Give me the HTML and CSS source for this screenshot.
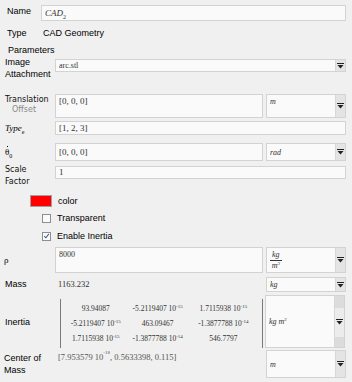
FILE: index.html
```html
<!DOCTYPE html>
<html lang="en">
<head>
    <meta charset="UTF-8" />
    <link rel="stylesheet" href="styles.css">
    <title>CAD Geometry</title>
</head>
<body>
    <div class="panel">
        <div class="row row-name">
            <span class="lbl lbl-short">Name</span>
            <div class="field"><i>CAD</i><sub>2</sub></div>
        </div>

        <div class="row row-type">
            <span class="lbl lbl-short">Type</span>
            <span class="plain">CAD Geometry</span>
        </div>

        <div class="row row-params">
            <span class="section">Parameters</span>
        </div>

        <div class="row row-image">
            <span class="lbl">Image<br>Attachment</span>
            <div class="combo combo-wide">
                <span class="combo-text">arc.stl</span>
                <span class="arrow"><svg width="7" height="6" viewBox="0 0 7 6"><rect x="0" y="0" width="7" height="1" fill="#222"/><path d="M0.5 2h6l-3 3.5z" fill="#222"/></svg></span>
            </div>
        </div>

        <div class="row row-trans">
            <span class="lbl lbl-alt">Translation<br><span class="sub-lbl">Offset</span></span>
            <div class="field field-tall">[0, 0, 0]</div>
            <div class="combo unit">
                <span class="combo-text"><i>m</i></span>
                <span class="arrow"><svg width="7" height="6" viewBox="0 0 7 6"><rect x="0" y="0" width="7" height="1" fill="#222"/><path d="M0.5 2h6l-3 3.5z" fill="#222"/></svg></span>
            </div>
        </div>

        <div class="row row-typee">
            <span class="lbl lbl-math"><i>Type</i><sub>e</sub></span>
            <div class="field">[1, 2, 3]</div>
        </div>

        <div class="row row-theta">
            <span class="lbl lbl-math"><span class="dot-over">θ</span><sub>0</sub></span>
            <div class="field">[0, 0, 0]</div>
            <div class="combo unit">
                <span class="combo-text"><i>rad</i></span>
                <span class="arrow"><svg width="7" height="6" viewBox="0 0 7 6"><rect x="0" y="0" width="7" height="1" fill="#222"/><path d="M0.5 2h6l-3 3.5z" fill="#222"/></svg></span>
            </div>
        </div>

        <div class="row row-scale">
            <span class="lbl lbl-alt">Scale<br>Factor</span>
            <div class="field">1</div>
        </div>

        <div class="row row-color">
            <span class="swatch"></span>
            <span class="plain">color</span>
        </div>

        <div class="row row-check">
            <span class="checkbox"></span>
            <span class="plain">Transparent</span>
        </div>

        <div class="row row-check row-inertia-check">
            <span class="checkbox">
                <svg width="8" height="8" viewBox="0 0 8 8"><path d="M1.5 4.2l1.8 1.8 3.4-4.4" fill="none" stroke="#3b5a9a" stroke-width="1.2"/></svg>
            </span>
            <span class="plain">Enable Inertia</span>
        </div>

        <div class="row row-rho">
            <span class="lbl lbl-rho">ρ</span>
            <div class="field field-rho">8000</div>
            <div class="combo unit">
                <span class="combo-text">
                    <span class="frac"><i class="num">kg</i><i class="den">m<sup>3</sup></i></span>
                </span>
                <span class="arrow"><svg width="7" height="6" viewBox="0 0 7 6"><rect x="0" y="0" width="7" height="1" fill="#222"/><path d="M0.5 2h6l-3 3.5z" fill="#222"/></svg></span>
            </div>
        </div>

        <div class="row row-mass">
            <span class="lbl">Mass</span>
            <span class="value">1163.232</span>
            <div class="combo unit">
                <span class="combo-text"><i>kg</i></span>
                <span class="arrow"><svg width="7" height="6" viewBox="0 0 7 6"><rect x="0" y="0" width="7" height="1" fill="#222"/><path d="M0.5 2h6l-3 3.5z" fill="#222"/></svg></span>
            </div>
        </div>

        <div class="row row-matrix">
            <span class="lbl">Inertia</span>
            <div class="matrix">
                <div class="mrow">
                    <span class="cell c1">93.94087</span>
                    <span class="cell c2">-5.2119407 10<sup>-15</sup></span>
                    <span class="cell c3">1.7115938 10<sup>-15</sup></span>
                </div>
                <div class="mrow">
                    <span class="cell c1">-5.2119407 10<sup>-15</sup></span>
                    <span class="cell c2">463.09467</span>
                    <span class="cell c3">-1.3877788 10<sup>-14</sup></span>
                </div>
                <div class="mrow">
                    <span class="cell c1">1.7115938 10<sup>-15</sup></span>
                    <span class="cell c2">-1.3877788 10<sup>-14</sup></span>
                    <span class="cell c3">546.7797</span>
                </div>
            </div>
            <div class="combo unit combo-scroll">
                <span class="combo-text"><span class="unit-expr"><i>kg</i> <i>m</i><sup>2</sup></span></span>
                <span class="arrow"><svg width="7" height="6" viewBox="0 0 7 6"><rect x="0" y="0" width="7" height="1" fill="#222"/><path d="M0.5 2h6l-3 3.5z" fill="#222"/></svg></span>
            </div>
        </div>

        <div class="row row-com">
            <span class="lbl">Center of<br>Mass</span>
            <span class="value value-com">[7.953579 10<sup>-18</sup>, 0.5633398, 0.115]</span>
            <div class="combo unit">
                <span class="combo-text"><i>m</i></span>
                <span class="arrow"><svg width="7" height="6" viewBox="0 0 7 6"><rect x="0" y="0" width="7" height="1" fill="#222"/><path d="M0.5 2h6l-3 3.5z" fill="#222"/></svg></span>
            </div>
        </div>
    </div>
</body>
</html>
```

FILE: styles.css
```css
* {
    box-sizing: border-box;
}

body {
    margin: 0;
    background-color: #f0f0f0;
    color: #000;
    font-family: "Liberation Sans", Arial, sans-serif;
    font-size: 9px;
}

.panel {
    width: 352px;
    padding: 5px 6px 0 0;
}

.row {
    display: flex;
    align-items: flex-start;
}

.lbl {
    flex: none;
    width: 55px;
    padding-left: 5px;
    line-height: 12px;
}

.lbl-short {
    width: 41px;
    padding-left: 7px;
}

.lbl-alt {
    font-family: "DejaVu Sans", sans-serif;
    font-size: 8px;
    color: #111;
}

.sub-lbl {
    padding-left: 7px;
    color: #8a8a8a;
}

.lbl-math {
    font-family: "Liberation Serif", serif;
    font-size: 9px;
}

.lbl-math sub {
    font-size: 6px;
}

.dot-over {
    position: relative;
}

.dot-over::after {
    content: "";
    position: absolute;
    left: 2px;
    top: -1px;
    width: 1px;
    height: 1px;
    background: #000;
}

.plain {
    line-height: 12px;
}

.field {
    flex: 1;
    min-width: 0;
    background-color: #fafafa;
    border: 1px solid #d3d3d3;
    padding-left: 3px;
    font-family: "Liberation Serif", serif;
    font-size: 9px;
    color: #333;
}

.field sub {
    font-size: 6px;
}

.combo {
    display: flex;
    background-color: #fafafa;
    border: 1px solid #d3d3d3;
}

.combo-text {
    flex: 1;
    display: flex;
    align-items: center;
    padding-left: 3px;
    font-family: "Liberation Serif", serif;
    font-size: 8px;
    color: #333;
}

.unit-expr sup {
    font-size: 5px;
    vertical-align: top;
    line-height: 5px;
}

.arrow {
    flex: none;
    width: 10px;
    display: flex;
    align-items: center;
    justify-content: center;
    background-color: #e4e4e4;
    border-left: 1px solid #d8d8d8;
}

.combo-wide {
    flex: 1;
}

.unit {
    flex: none;
    width: 80px;
    margin-left: 3px;
}

/* rows, top to bottom */
.row-name {
    height: 16px;
}

.row-name .field {
    height: 16px;
    line-height: 14px;
    padding-left: 3px;
}

.row-type {
    margin-top: 6px;
    height: 12px;
}

.row-type .lbl {
    width: 43px;
}

.row-params {
    margin-top: 5px;
    height: 12px;
}

.section {
    padding-left: 8px;
    line-height: 12px;
}

.row-image {
    margin-top: 0;
    height: 25px;
}

.row-image .combo {
    margin-top: 3px;
    height: 13px;
}

.row-image .combo-text {
    font-size: 8px;
}

.row-trans {
    margin-top: 13px;
    height: 24px;
}

.row-trans .lbl {
    line-height: 10px;
    padding-top: 1px;
}

.field-tall {
    height: 24px;
    line-height: 12px;
}

.row-trans .unit {
    height: 24px;
}

.row-trans .combo-text {
    align-items: flex-start;
    padding-top: 2px;
}

.row-typee {
    margin-top: 3px;
    height: 14px;
}

.row-typee .lbl {
    line-height: 14px;
}

.row-typee .field {
    height: 14px;
    line-height: 12px;
}

.row-theta {
    margin-top: 8px;
    height: 18px;
}

.row-theta .lbl {
    line-height: 18px;
}

.row-theta .field {
    height: 18px;
    line-height: 16px;
}

.row-theta .unit {
    height: 18px;
}

.row-scale {
    margin-top: 3px;
    height: 24px;
}

.row-scale .field {
    margin-top: 2px;
    height: 13px;
    line-height: 11px;
}

.row-color {
    margin-top: 7px;
    height: 12px;
    align-items: center;
}

.swatch {
    width: 22px;
    height: 12px;
    margin-left: 30px;
    margin-right: 6px;
    background-color: #ff0000;
    border: 1px solid #a0a0a0;
}

.row-check {
    margin-top: 6px;
    height: 10px;
    align-items: center;
}

.row-inertia-check {
    margin-top: 8px;
}

.checkbox {
    display: flex;
    align-items: center;
    justify-content: center;
    width: 9px;
    height: 9px;
    margin-left: 42px;
    margin-right: 6px;
    background-color: #fafafa;
    border: 1px solid #8e8e8e;
}

.row-rho {
    margin-top: 6px;
    height: 26px;
}

.lbl-rho {
    padding-left: 4px;
    line-height: 26px;
    font-family: "Liberation Serif", serif;
}

.field-rho {
    height: 26px;
    line-height: 14px;
    font-size: 8px;
}

.row-rho .unit {
    height: 26px;
}

.frac {
    display: inline-flex;
    flex-direction: column;
    align-items: center;
    font-size: 8px;
    line-height: 10px;
}

.frac .num {
    border-bottom: 1px solid #333;
    padding: 0 2px;
}

.frac sup {
    font-size: 5px;
    vertical-align: top;
    line-height: 5px;
}

.row-mass {
    margin-top: 4px;
    height: 15px;
}

.row-mass .lbl {
    line-height: 15px;
}

.value {
    flex: 1;
    padding-left: 3px;
    line-height: 15px;
    font-family: "Liberation Serif", serif;
    font-size: 8.5px;
    color: #333;
}

.row-mass .unit {
    height: 15px;
}

.row-matrix {
    margin-top: 3px;
    height: 53px;
    align-items: center;
}

.row-matrix .lbl {
    width: 60px;
}

.matrix {
    flex: none;
    width: 203px;
    height: 49px;
    margin-top: 3px;
    padding-top: 2px;
    border-left: 1px solid #7a7a7a;
    border-right: 1px solid #7a7a7a;
    font-family: "Liberation Serif", serif;
    font-size: 7.5px;
    color: #333;
}

.mrow {
    display: flex;
    height: 15px;
    align-items: center;
}

.cell {
    display: flex;
    justify-content: center;
    white-space: nowrap;
}

.cell sup {
    font-size: 5px;
    vertical-align: top;
    line-height: 5px;
}

.c1 {
    width: 72px;
}

.c2 {
    width: 56px;
}

.c3 {
    width: 80px;
}

.row-matrix .unit {
    height: 53px;
    margin-left: 2px;
}

.combo-scroll .arrow {
    background: linear-gradient(#dcdcdc 0, #dcdcdc 12px, #ececec 12px, #ececec 41px, #dcdcdc 41px);
}

.row-com {
    margin-top: 2px;
    height: 28px;
}

.row-com .lbl {
    padding-left: 4px;
    padding-top: 2px;
}

.value-com {
    line-height: 14px;
    color: #555;
}

.value-com sup {
    font-size: 5px;
    vertical-align: top;
    line-height: 5px;
}

.row-com .unit {
    height: 28px;
}
```
